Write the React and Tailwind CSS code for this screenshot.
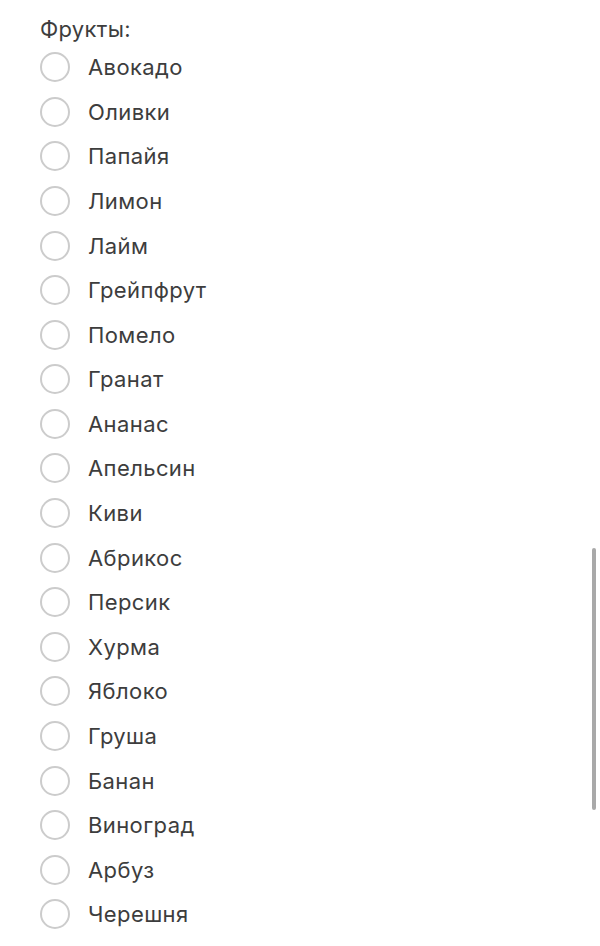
import React from "react";

const fruits = [
  "Авокадо","Оливки","Папайя","Лимон","Лайм","Грейпфрут","Помело","Гранат","Ананас","Апельсин",
  "Киви","Абрикос","Персик","Хурма","Яблоко","Груша","Банан","Виноград","Арбуз","Черешня",
];

export default function App() {
  return (
    <div className="relative w-[600px] h-[946px] bg-white overflow-hidden" style={{ fontFamily: "Inter, 'Noto Sans', sans-serif" }}>
      <div className="pl-[40px] pt-[15px]">
        <div className="text-[22px] leading-[28px] tracking-[0.3px] text-[#3d3d3d] h-[30px]">Фрукты:</div>
        <div className="flex flex-col">
          {fruits.map((f) => (
            <label key={f} className="flex items-center h-[44.58px]">
              <span className="w-[30px] h-[30px] rounded-full border-2 border-[#cccccc] bg-white shrink-0" />
              <span className="ml-[18px] text-[22px] tracking-[0.4px] text-[#3d3d3d] leading-none">{f}</span>
            </label>
          ))}
        </div>
      </div>
      <div className="absolute left-[592px] top-[548px] w-[4px] h-[262px] rounded-full bg-[#a9a9a9]" />
    </div>
  );
}
